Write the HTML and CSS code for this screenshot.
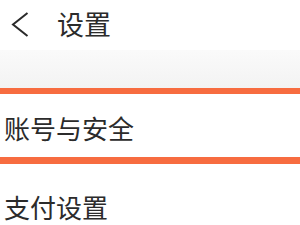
FILE: index.html
```html
<!DOCTYPE html>
<html lang="zh">
<head>
    <meta charset="UTF-8">
    <meta name="viewport" content="width=device-width, initial-scale=1.0">
    <title>设置</title>
    <link rel="stylesheet" href="styles.css">
</head>
<body>
    <div class="header">
        <svg class="back" width="19" height="28" viewBox="0 0 19 28">
            <path d="M17.5 2 L3 13.5 L17.5 25" fill="none" stroke="#2a2a2a" stroke-width="2"/>
        </svg>
        <h1>设置</h1>
    </div>
    <div class="gap"></div>
    <div class="item">账号与安全</div>
    <div class="item last">支付设置</div>
</body>
</html>
```
FILE: styles.css
```css
body {
    margin: 0;
    background: #ffffff;
    font-family: "Noto Sans CJK SC", "Noto Sans", sans-serif;
    color: #2b2b2b;
    overflow: hidden;
}
.header {
    height: 50px;
    display: flex;
    align-items: center;
    padding-left: 10px;
}
.back {
    margin-top: 0;
}
.header h1 {
    margin: -3px 0 0 28px;
    font-size: 27px;
    font-weight: normal;
}
.gap {
    height: 38px;
    background: linear-gradient(#fafafa, #f3f3f3);
    border-bottom: 6px solid #f76c40;
}
.item {
    height: 60px;
    padding-top: 3px;
    display: flex;
    align-items: center;
    padding-left: 4px;
    font-size: 26px;
    border-bottom: 7px solid #f76c40;
}
.item.last {
    height: 38px;
    padding-top: 23px;
    border-bottom: none;
}
```
